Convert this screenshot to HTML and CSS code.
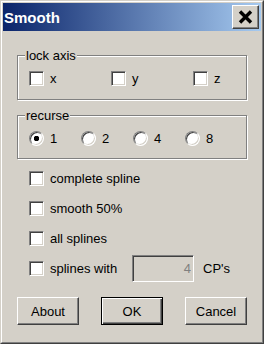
FILE: index.html
```html
<!DOCTYPE html>
<html lang="en">
  <head>
    <meta name="viewport" content="width=device-width, initial-scale=1">
    <link rel="stylesheet" href="styles.css">
  </head>
  <body>
    <div class="window">
      <div class="frame">
        <div class="titlebar">
          <span class="title">Smooth</span>
          <button class="close" aria-label="Close">
            <svg width="15" height="14" viewBox="0 0 15 14">
              <path d="M2 1.5 L13 12.5 M13 1.5 L2 12.5" stroke="#000" stroke-width="3.4" fill="none"/>
            </svg>
          </button>
        </div>
        <div class="content">
          <fieldset class="group">
            <legend>lock axis</legend>
            <div class="axes">
              <label class="opt"><input type="checkbox" class="box">x</label>
              <label class="opt"><input type="checkbox" class="box">y</label>
              <label class="opt"><input type="checkbox" class="box">z</label>
            </div>
          </fieldset>
          <fieldset class="group recurse">
            <legend>recurse</legend>
            <div class="levels">
              <label class="opt"><input type="radio" name="rec" class="box round" checked>1</label>
              <label class="opt"><input type="radio" name="rec" class="box round">2</label>
              <label class="opt"><input type="radio" name="rec" class="box round">4</label>
              <label class="opt"><input type="radio" name="rec" class="box round">8</label>
            </div>
          </fieldset>
          <div class="options">
            <label class="opt"><input type="checkbox" class="box">complete spline</label>
            <label class="opt"><input type="checkbox" class="box">smooth 50%</label>
            <label class="opt"><input type="checkbox" class="box">all splines</label>
            <div class="opt">
              <label class="opt lead"><input type="checkbox" class="box">splines with</label>
              <input class="count" type="text" value="4" disabled>
              <span class="unit">CP's</span>
            </div>
          </div>
          <div class="buttons">
            <button class="btn">About</button>
            <button class="btn default">OK</button>
            <button class="btn">Cancel</button>
          </div>
        </div>
      </div>
    </div>
  </body>
</html>
```

FILE: styles.css
```css
body {
  margin: 0;
  background: #d4d0c8;
  color: #000;
  font-family: "Liberation Sans", Arial, sans-serif;
  font-size: 13px;
}
.window {
  width: 264px;
  height: 344px;
  box-sizing: border-box;
  border: 1px solid;
  border-color: #d4d0c8 #404040 #404040 #d4d0c8;
  background: #d4d0c8;
}
.frame {
  height: 100%;
  box-sizing: border-box;
  border: 1px solid;
  border-color: #fff #808080 #808080 #fff;
  padding: 1px;
}
.titlebar {
  height: 28px;
  display: flex;
  align-items: center;
  justify-content: space-between;
  padding: 0 2px 0 1px;
  background: linear-gradient(to right, #0a246a, #a6caf0);
}
.title {
  color: #fff;
  font-weight: bold;
  font-size: 15px;
}
.close {
  width: 27px;
  height: 24px;
  padding: 0;
  display: flex;
  align-items: center;
  justify-content: center;
  background: #d4d0c8;
  border: 1px solid;
  border-color: #fff #404040 #404040 #fff;
  box-shadow: inset -1px -1px #808080;
}

.content {
  padding: 17px 14px 0 14px;
}
.group {
  min-inline-size: 0;
  margin: 0;
  padding: 8px 0 13px 0;
  border: 1px solid #808080;
  box-shadow: inset 1px 1px #fff, 1px 1px #fff;
}
.group legend {
  margin-left: 7px;
  padding: 0 1px;
  line-height: 15px;
  background: #d4d0c8;
}
.recurse {
  margin-top: 8px;
  padding-bottom: 12px;
}
.axes {
  display: grid;
  grid-template-columns: 82px 82px auto;
  padding-left: 11px;
}
.levels {
  display: grid;
  grid-template-columns: repeat(3, 52px) auto;
  padding-left: 11px;
}

.opt {
  display: flex;
  align-items: center;
  gap: 6px;
  line-height: 15px;
}
.box {
  appearance: none;
  -webkit-appearance: none;
  margin: 0;
  width: 15px;
  height: 15px;
  flex: none;
  border: 1px solid;
  border-color: #808080 #fff #fff #808080;
  box-shadow: inset 1px 1px #404040, inset -1px -1px #d4d0c8;
  background: #fff;
}
.box.round {
  border-radius: 50%;
}
.box.round:checked {
  background: radial-gradient(circle, #000 0 2.5px, #fff 3px);
}

.options {
  padding: 6px 0 0 12px;
  display: flex;
  flex-direction: column;
  gap: 3px;
}
.options > .opt {
  height: 27px;
}
.opt.lead {
  flex: 0 0 97px;
}
.count {
  width: 62px;
  height: 27px;
  box-sizing: border-box;
  margin: 0;
  padding: 0 2px;
  text-align: right;
  font: inherit;
  color: #808080;
  border: 1px solid;
  border-color: #808080 #fff #fff #808080;
  box-shadow: inset 1px 1px #404040, inset -1px -1px #d4d0c8;
  background: #d4d0c8;
}
.unit {
  margin-left: 3px;
}

.buttons {
  margin-top: 15px;
  display: flex;
  justify-content: space-between;
}
.btn {
  width: 62px;
  height: 28px;
  padding: 0;
  font: inherit;
  color: #000;
  background: #d4d0c8;
  border: 1px solid;
  border-color: #fff #404040 #404040 #fff;
  box-shadow: inset -1px -1px #808080;
}
.btn.default {
  border-color: #000;
  box-shadow: inset 1px 1px #fff, inset -1px -1px #404040, inset -2px -2px #808080;
}
```
